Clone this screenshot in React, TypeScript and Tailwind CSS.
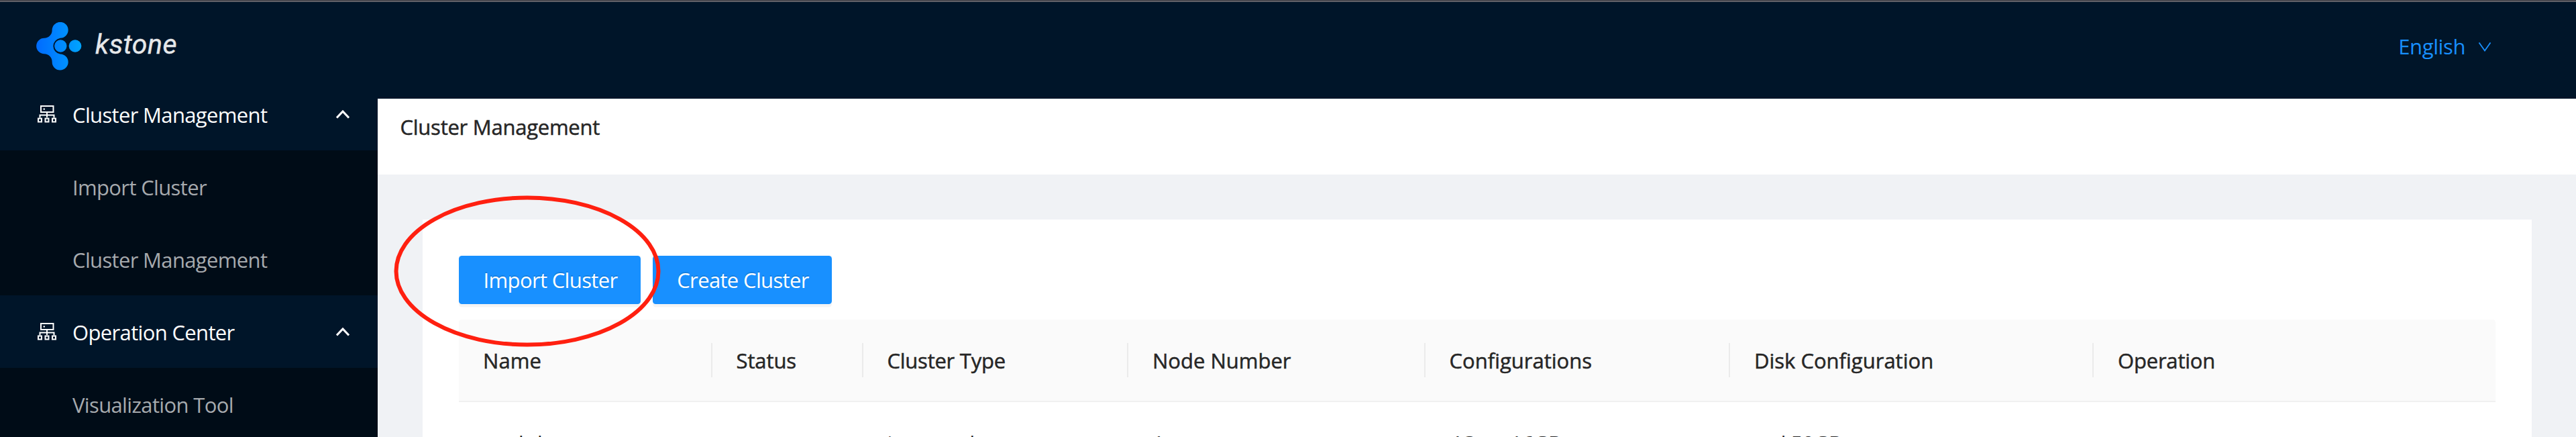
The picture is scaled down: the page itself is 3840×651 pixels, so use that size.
function Logo() {
  return (
    <svg width="80" height="84" viewBox="0 0 240 252" className="shrink-0">
      <defs>
        <linearGradient id="brand" gradientUnits="userSpaceOnUse" x1="0" y1="110" x2="204" y2="110">
          <stop offset="0" stopColor="#006bff" />
          <stop offset="0.6" stopColor="#008cff" />
          <stop offset="1" stopColor="#00a5ff" />
        </linearGradient>
      </defs>
      <g fill="url(#brand)">
        <path d="M36 71C56 71 71 56 71 36A36 36 0 1 1 107 71.500A37 36 0 0 0 107 142.500A36 36 0 1 1 71 178C71 158 56 142 36 142A35.500 35.500 0 0 1 36 71Z" />
        <circle cx="109" cy="106.500" r="27.500" />
        <circle cx="174" cy="106.500" r="28" />
      </g>
    </svg>
  );
}

function ClusterIcon() {
  return (
    <svg width="28" height="26" viewBox="0 0 28 26" fill="none" stroke="currentColor" strokeWidth="2" className="shrink-0">
      <path d="M5 1H23.500V10H5Z" />
      <path d="M14 10V18M3.500 18.500V14.500H24.500V18.500" />
      <path d="M1 19.500H6V24.500H1ZM11.500 19.500H16.500V24.500H11.500ZM22 19.500H27V24.500H22Z" />
      <path d="M8.500 5.500H11" />
    </svg>
  );
}

function Chevron({ up = false }: { up?: boolean }) {
  return up ? (
    <svg width="20" height="14" viewBox="0 0 20 14" fill="none" stroke="currentColor" strokeWidth="3">
      <path d="M1 12.500L10 3L19 12.500" />
    </svg>
  ) : (
    <svg width="20" height="14" viewBox="0 0 20 14" fill="none" stroke="currentColor" strokeWidth="1.800">
      <path d="M1.500 0.500L10 12.500L18.500 0.500" />
    </svg>
  );
}

function MenuGroup({ label, items }: { label: string; items: string[] }) {
  return (
    <div className="shrink-0">
      <div className="flex h-[108px] items-center bg-[#001529] pr-[42px] pl-[56px] text-white">
        <ClusterIcon />
        <span className="mt-0.5 ml-[24px] flex-1 tracking-[-0.65px]">{label}</span>
        <Chevron up />
      </div>
      {items.map((item) => (
        <div key={item} className="flex h-[108px] items-center bg-[#000c17] pt-0.5 pl-[108px] tracking-[-0.65px] text-[#a6aaae]">
          {item}
        </div>
      ))}
    </div>
  );
}

const buttonClass =
  'flex h-[72px] items-center justify-center rounded-[4.5px] bg-[#1890ff] pl-0.5 tracking-[-0.65px] text-white shadow-[0_4.5px_0_rgba(0,0,0,0.043)] [text-shadow:0_-2.25px_0_rgba(0,0,0,0.12)]';

const columns = [
  { title: 'Name', value: 'etcd-demo', width: 'w-[377.5px]', track: 'tracking-[0.1px]' },
  { title: 'Status', value: '', width: 'w-[225px]', track: 'tracking-[-0.1px]' },
  { title: 'Cluster Type', value: 'imported', width: 'w-[395.5px]', track: 'tracking-[-0.25px]' },
  { title: 'Node Number', value: '1', width: 'w-[442.5px]', track: 'tracking-[0px]' },
  { title: 'Configurations', value: '4Core 16GB', width: 'w-[454.5px]', track: 'tracking-[0px]' },
  { title: 'Disk Configuration', value: 'ssd 50GB', width: 'w-[542px]', track: 'tracking-[0px]' },
  { title: 'Operation', value: '', width: 'w-[599px]', track: 'tracking-[-0.2px]' },
];

export default function App() {
  return (
    <div className="relative flex h-[651px] w-[3840px] overflow-hidden bg-[#f0f2f5] font-['Open_Sans','Noto_Sans',sans-serif] text-[31px] leading-[50px] whitespace-nowrap text-[#262626]">
      <aside className="flex w-[563px] shrink-0 flex-col bg-[#000c17]">
        <div className="flex h-[116px] shrink-0 bg-[#001529] pt-[33px] pl-[54px]">
          <Logo />
          <span className="mt-[8px] ml-[8px] font-['Roboto',sans-serif] text-[41px] leading-[50px] font-normal tracking-[0.5px] text-[#e6e8ea] italic [-webkit-text-stroke:0.4px_#e6e8ea]">
            kstone
          </span>
        </div>
        <MenuGroup label="Cluster Management" items={['Import Cluster', 'Cluster Management']} />
        <MenuGroup label="Operation Center" items={['Visualization Tool']} />
      </aside>

      <div className="flex min-w-0 flex-1 flex-col">
        <header className="flex h-[147px] shrink-0 justify-end bg-[#001529] pt-[44px] pr-[126px] text-[#1890ff]">
          <span className="tracking-[-0.4px]">English</span>
          <span className="mt-[19px] ml-[19px]">
            <Chevron />
          </span>
        </header>
        <div className="h-[113px] shrink-0 bg-white pt-[17px] pl-[33.5px] tracking-[-0.25px] [-webkit-text-stroke:0.5px_#262626]">
          Cluster Management
        </div>
        <main className="flex-1 pt-[67px] pr-[66px] pl-[67px]">
          <section className="h-[400px] bg-white px-[54px] pt-[54px]">
            <div className="flex gap-[18px]">
              <button className={`w-[271px] ${buttonClass}`}>Import Cluster</button>
              <button className={`w-[267px] ${buttonClass}`}>Create Cluster</button>
            </div>
            <div className="mt-[23px] flex h-[123px] items-center overflow-hidden rounded-t-[4.5px] border-b-2 border-[#f0f0f0] bg-[#fafafa]">
              {columns.map((column, i) => (
                <div
                  key={column.title}
                  className={`flex h-[51px] shrink-0 items-center pl-9 [-webkit-text-stroke:0.5px_#262626] ${column.width} ${column.track} ${i < columns.length - 1 ? 'border-r-2 border-[#ebebeb]' : ''}`}
                >
                  {column.title}
                </div>
              ))}
            </div>
            <div className="flex h-[121px] items-center">
              {columns.map((column) => (
                <div key={column.title} className={`shrink-0 pl-9 tracking-[-0.5px] ${column.width}`}>
                  {column.value}
                </div>
              ))}
            </div>
          </section>
        </main>
      </div>

      <div className="absolute inset-x-0 top-0 h-[3px] border-t border-[#3b3b42] bg-[#606068]" />
      <svg className="absolute top-[288px] left-[584px]" width="404" height="232" fill="none">
        <ellipse cx="202" cy="116" rx="195.500" ry="109.500" stroke="#ff2010" strokeWidth="6" />
      </svg>
    </div>
  );
}
